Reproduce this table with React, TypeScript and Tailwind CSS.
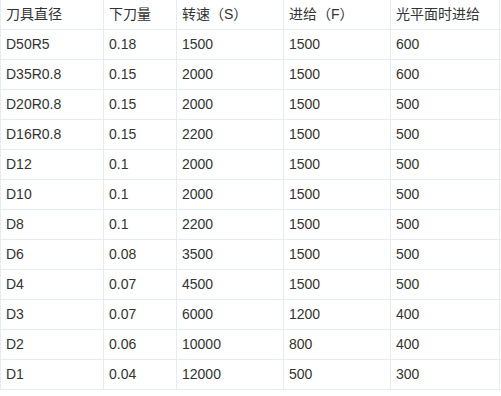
const header = ['刀具直径', '下刀量', '转速（S）', '进给（F）', '光平面时进给']

const rows = [
  ['D50R5', '0.18', '1500', '1500', '600'],
  ['D35R0.8', '0.15', '2000', '1500', '600'],
  ['D20R0.8', '0.15', '2000', '1500', '500'],
  ['D16R0.8', '0.15', '2200', '1500', '500'],
  ['D12', '0.1', '2000', '1500', '500'],
  ['D10', '0.1', '2000', '1500', '500'],
  ['D8', '0.1', '2200', '1500', '500'],
  ['D6', '0.08', '3500', '1500', '500'],
  ['D4', '0.07', '4500', '1500', '500'],
  ['D3', '0.07', '6000', '1200', '400'],
  ['D2', '0.06', '10000', '800', '400'],
  ['D1', '0.04', '12000', '500', '300'],
]

const widths = ['w-[104px]', 'w-[73px]', 'w-[107px]', 'w-[107px]', 'w-[109px]']

function Row({ cells }: { cells: string[] }) {
  return (
    <div className="flex h-[30px] border-b border-[#e5ecf3]">
      {cells.map((c, i) => (
        <div
          key={i}
          className={`${widths[i]} flex items-center pl-[5px] border-r border-[#e5ecf3] ${i === 0 ? 'border-l' : ''}`}
        >
          {c}
        </div>
      ))}
    </div>
  )
}

export default function App() {
  return (
    <div
      className="w-[501px] h-[396px] bg-white text-[14px] text-[#333333]"
      style={{ fontFamily: '"Liberation Sans", "Noto Sans CJK SC", sans-serif' }}
    >
      <Row cells={header} />
      {rows.map((r, i) => (
        <Row key={i} cells={r} />
      ))}
    </div>
  )
}
